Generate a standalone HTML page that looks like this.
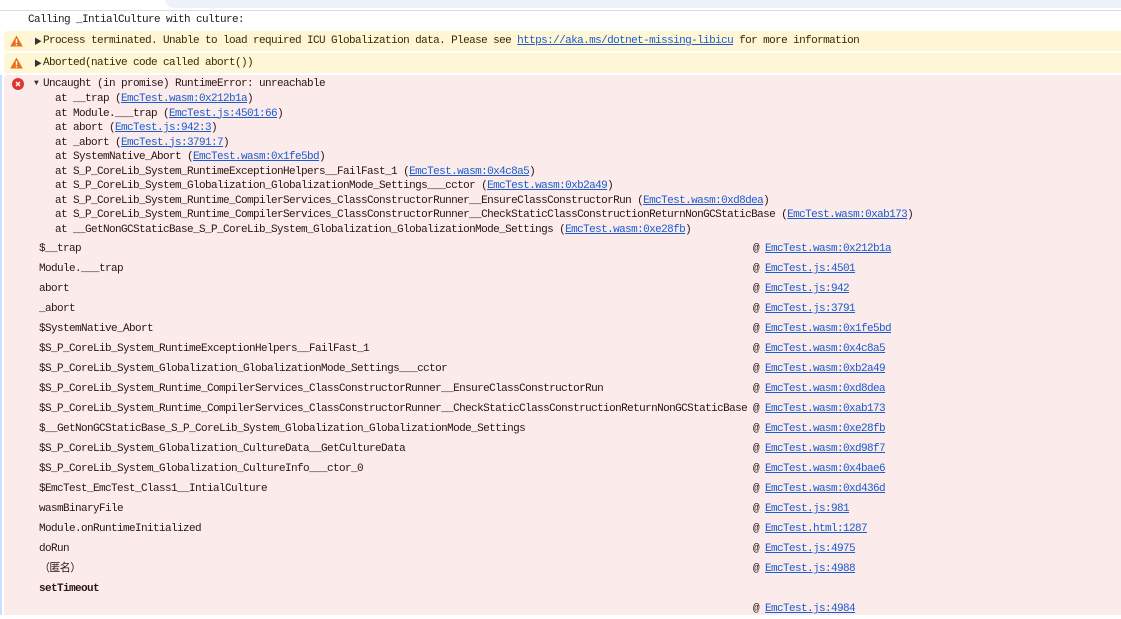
<!DOCTYPE html>
<html><head><meta charset="utf-8"><style>
*{margin:0;padding:0;box-sizing:border-box}
body{width:1121px;height:606px;overflow:hidden;background:#fff;font-family:"Liberation Mono","Noto Sans CJK SC",monospace;font-size:11px;letter-spacing:-0.6px;position:relative}
.tb{position:absolute;left:0;top:0;width:1121px;height:11px;border-bottom:1px solid #d6dcea;background:#fff}
.filt{position:absolute;left:165px;top:-10px;width:970px;height:18px;border-radius:9px;background:#edf1f9}
.l{position:absolute;white-space:pre;line-height:14px}
.w{position:absolute;left:4px;width:1117px;height:20px;background:#fef6d5;border-radius:4px 0 0 4px;color:#3b2a00}
.e{position:absolute;left:4px;top:75px;width:1117px;height:540px;background:#fcebeb;border-radius:4px 0 0 0}
.strip{position:absolute;left:0;top:75px;width:2px;height:540px;background:#cddffc}
a{color:#1a5ccf;text-decoration:underline}
.ic{position:absolute;left:10px;width:13px;height:12px}
.tri{position:absolute;left:34px;font-size:8px;letter-spacing:0}
.s{color:#2a1414}
</style></head><body>
<div class="tb"><div class="filt"></div></div>
<div class="l" style="left:28px;top:13px;color:#202124">Calling _IntialCulture with culture:</div>

<div class="w" style="top:31px"></div>
<svg class="ic" style="top:35px" viewBox="0 0 13 12"><path d="M6.5 0.5L12.8 11.5H0.2Z" fill="#e8711a"/><rect x="5.8" y="4" width="1.4" height="4" fill="#fff"/><rect x="5.8" y="9" width="1.4" height="1.4" fill="#fff"/></svg>
<div class="tri" style="top:36px;color:#333">▶</div>
<div class="l" style="left:43px;top:34px;color:#3b2a00">Process terminated. Unable to load required ICU Globalization data. Please see <a>https://aka.ms/dotnet-missing-libicu</a> for more information</div>

<div class="w" style="top:53px"></div>
<svg class="ic" style="top:57px" viewBox="0 0 13 12"><path d="M6.5 0.5L12.8 11.5H0.2Z" fill="#e8711a"/><rect x="5.8" y="4" width="1.4" height="4" fill="#fff"/><rect x="5.8" y="9" width="1.4" height="1.4" fill="#fff"/></svg>
<div class="tri" style="top:58px;color:#333">▶</div>
<div class="l" style="left:43px;top:56px;color:#3b2a00">Aborted(native code called abort())</div>

<div class="strip"></div>
<div class="e"></div>
<svg style="position:absolute;left:12px;top:78px" width="12" height="12" viewBox="0 0 12 12"><circle cx="6" cy="6" r="6" fill="#dc362e"/><path d="M4 4L8 8M8 4L4 8" stroke="#fff" stroke-width="1.4"/></svg>
<div class="tri" style="top:79px;color:#333">▼</div>
<div class="l s" style="left:43px;top:77px">Uncaught (in promise) RuntimeError: unreachable</div>
<div class="l s" style="left:55px;top:92px;line-height:14.5px">at __trap (<a>EmcTest.wasm:0x212b1a</a>)
at Module.___trap (<a>EmcTest.js:4501:66</a>)
at abort (<a>EmcTest.js:942:3</a>)
at _abort (<a>EmcTest.js:3791:7</a>)
at SystemNative_Abort (<a>EmcTest.wasm:0x1fe5bd</a>)
at S_P_CoreLib_System_RuntimeExceptionHelpers__FailFast_1 (<a>EmcTest.wasm:0x4c8a5</a>)
at S_P_CoreLib_System_Globalization_GlobalizationMode_Settings___cctor (<a>EmcTest.wasm:0xb2a49</a>)
at S_P_CoreLib_System_Runtime_CompilerServices_ClassConstructorRunner__EnsureClassConstructorRun (<a>EmcTest.wasm:0xd8dea</a>)
at S_P_CoreLib_System_Runtime_CompilerServices_ClassConstructorRunner__CheckStaticClassConstructionReturnNonGCStaticBase (<a>EmcTest.wasm:0xab173</a>)
at __GetNonGCStaticBase_S_P_CoreLib_System_Globalization_GlobalizationMode_Settings (<a>EmcTest.wasm:0xe28fb</a>)</div>
<div class="l s" style="left:39px;top:239px;line-height:20px">$__trap
Module.___trap
abort
_abort
$SystemNative_Abort
$S_P_CoreLib_System_RuntimeExceptionHelpers__FailFast_1
$S_P_CoreLib_System_Globalization_GlobalizationMode_Settings___cctor
$S_P_CoreLib_System_Runtime_CompilerServices_ClassConstructorRunner__EnsureClassConstructorRun
$S_P_CoreLib_System_Runtime_CompilerServices_ClassConstructorRunner__CheckStaticClassConstructionReturnNonGCStaticBase
$__GetNonGCStaticBase_S_P_CoreLib_System_Globalization_GlobalizationMode_Settings
$S_P_CoreLib_System_Globalization_CultureData__GetCultureData
$S_P_CoreLib_System_Globalization_CultureInfo___ctor_0
$EmcTest_EmcTest_Class1__IntialCulture
wasmBinaryFile
Module.onRuntimeInitialized
doRun
（匿名）
<b>setTimeout</b>
</div>
<div class="l s" style="left:753px;top:239px;line-height:20px">@ <a>EmcTest.wasm:0x212b1a</a>
@ <a>EmcTest.js:4501</a>
@ <a>EmcTest.js:942</a>
@ <a>EmcTest.js:3791</a>
@ <a>EmcTest.wasm:0x1fe5bd</a>
@ <a>EmcTest.wasm:0x4c8a5</a>
@ <a>EmcTest.wasm:0xb2a49</a>
@ <a>EmcTest.wasm:0xd8dea</a>
@ <a>EmcTest.wasm:0xab173</a>
@ <a>EmcTest.wasm:0xe28fb</a>
@ <a>EmcTest.wasm:0xd98f7</a>
@ <a>EmcTest.wasm:0x4bae6</a>
@ <a>EmcTest.wasm:0xd436d</a>
@ <a>EmcTest.js:981</a>
@ <a>EmcTest.html:1287</a>
@ <a>EmcTest.js:4975</a>
@ <a>EmcTest.js:4988</a>

@ <a>EmcTest.js:4984</a></div>
</body></html>
